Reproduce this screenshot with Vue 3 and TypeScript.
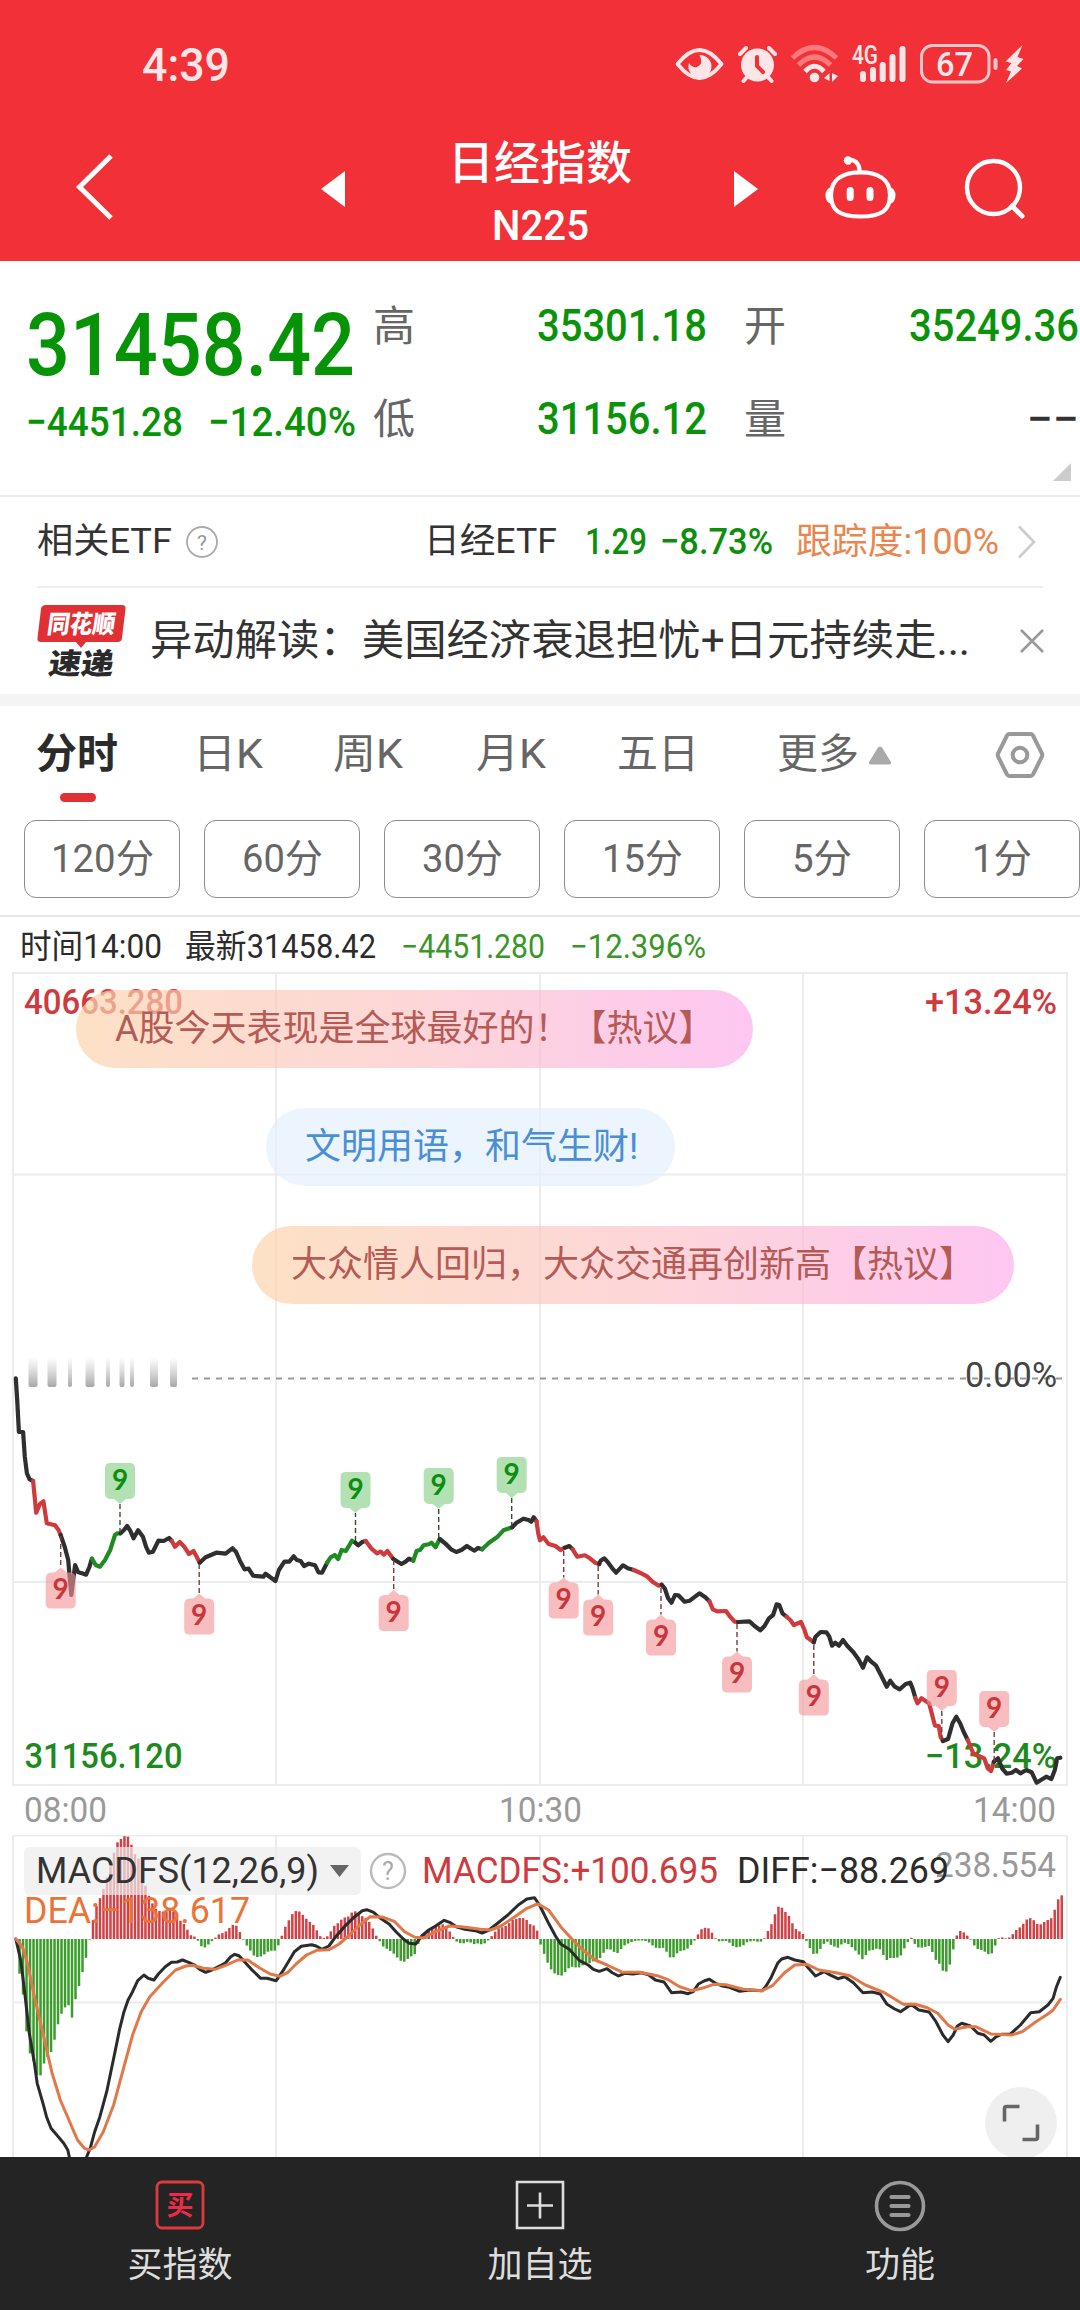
<script setup lang="ts">
import type { Directive } from 'vue'

type Pt = [number, number]

/* Condenses a run of text horizontally so that it takes exactly the given width. */
const vFit: Directive<HTMLElement, number> = {
  mounted(el, { value }) {
    el.style.display = 'inline-block'
    el.style.whiteSpace = 'nowrap'
    el.style.flexShrink = '0'
    el.style.transformOrigin = '0 50%'
    el.style.width = 'max-content'
    const natural = el.getBoundingClientRect().width
    el.style.transform = `scaleX(${value / natural})`
    el.style.marginRight = `${value - natural}px`
  },
}

const tabs = [
  { label: '分时', w: 82, gap: 36, active: true },
  { label: '日K', w: 70, gap: 75, active: false },
  { label: '周K', w: 70, gap: 70, active: false },
  { label: '月K', w: 70, gap: 73, active: false },
  { label: '五日', w: 82, gap: 71, active: false },
  { label: '更多', w: 82, gap: 78, active: false },
]
const periods = [
  { t: '120分', w: 103 },
  { t: '60分', w: 81 },
  { t: '30分', w: 81 },
  { t: '15分', w: 81 },
  { t: '5分', w: 60 },
  { t: '1分', w: 60 },
]

const KX = 2.904
const KY = 3
function parse(raw: string, ox: number, oy: number): Pt[] {
  return raw
    .trim()
    .split(/\s+/)
    .map((p) => {
      const [x, y] = p.split(',').map(Number)
      return [ox + x / KX, oy + y / KY] as Pt
    })
}
const toPoints = (pts: Pt[]) => pts.map(([x, y]) => `${x.toFixed(1)},${y.toFixed(1)}`).join(' ')

/* Price line, split in runs by colour: k = plain, r = falling nine, g = rising nine. */
const morning: [string, string][] = [
  ['k', '46,55 50,120 55,216 67,216 72,290 78,340 86,358 96,363'],
  ['r', '96,363 105,458 116,432 126,424 136,490 160,496 170,510 176,525'],
  ['k', '176,525 188,560 198,600 207,705 218,615 227,637 238,640 250,644 260,620 267,596'],
  ['g', '267,596 278,615 290,620 305,600 320,570 334,525 341,520 350,520'],
  ['k', '350,520 360,510 369,498 378,512 388,535 401,511 415,530 424,560 432,578 444,575 460,542 475,543 491,534 499,543'],
  ['r', '499,543 508,560 522,546 535,560 549,582 562,573 570,588 580,608'],
  ['k', '580,608 597,592 628,578 655,581 675,565 685,575 697,603 710,628 722,626 735,647 765,650 771,641 785,652 800,663 810,630 826,605 840,605 853,589 862,600 873,603 883,618 897,611 915,616 925,637 935,638 950,608'],
  ['g', '950,608 960,592 972,585 982,597 992,570 1004,573 1012,560 1022,542 1032,548'],
  ['k', '1032,548 1040,556 1052,546 1062,543'],
  ['r', '1062,543 1078,565 1095,580 1105,575 1115,584 1125,573 1142,597'],
  ['k', '1142,597 1155,605 1166,612 1178,605 1188,596 1200,602'],
  ['g', '1200,602 1210,572 1220,570 1230,556 1245,553 1253,548 1265,562 1277,537'],
  ['k', '1277,537 1295,552 1310,568 1325,576 1340,570 1356,558 1368,566 1378,572 1388,564 1400,568'],
  ['g', '1400,568 1420,548 1445,530 1462,511 1487,502'],
  ['k', '1487,502 1500,488 1520,476 1535,480 1543,485 1550,472 1558,484'],
  ['r', '1558,484 1563,520 1568,540'],
]
const afternoon: [string, string][] = [
  ['r', '0,300 10,292 25,312 45,318 60,330 72,323'],
  ['k', '72,323 85,318 95,328'],
  ['r', '95,328 108,350 130,346 145,355 160,368 172,372'],
  ['k', '172,372 176,362 187,355 198,368 210,385 221,398 230,388 241,376 255,385 272,390'],
  ['r', '272,390 290,398 312,410 328,426 345,437 353,434'],
  ['k', '353,434 362,445 372,475 382,488 392,465 402,466 420,485 435,482 463,460 480,472 492,484'],
  ['r', '492,484 502,508 515,514 540,513 552,530 565,545 575,546'],
  ['k', '575,546 608,544 622,557 640,571 652,558 665,535 677,525 687,493 695,495 704,520 716,530'],
  ['r', '716,530 727,540 737,555 758,546 768,570 775,592 795,607'],
  ['k', '795,607 800,590 815,576 832,577 840,590 848,617 857,608 868,617 880,600 892,617 910,637 925,658 938,683 950,652 962,665 976,677 990,705 1007,740 1017,722 1030,740 1045,748 1062,732 1075,728 1082,745 1090,773'],
  ['r', '1090,773 1096,790 1108,775 1130,790 1140,830 1147,857 1158,858 1163,890 1170,903'],
  ['k', '1170,903 1185,897 1198,850 1209,830 1220,850 1230,875 1242,900'],
  ['r', '1242,900 1258,940 1290,955 1300,985 1310,993 1318,965'],
  ['k', '1318,965 1330,955 1342,985 1355,1001 1370,998 1382,990 1395,1000 1412,990 1428,997 1442,1028 1470,1010 1485,1017 1495,990 1502,955 1511,953'],
]
const priceRuns = [
  ...morning.map(([c, raw]) => ({ c, points: toPoints(parse(raw, 0, 1360)) })),
  ...afternoon.map(([c, raw]) => ({ c, points: toPoints(parse(raw, 540, 1440)) })),
]

interface Nine { x: number; tip: number; end: number; up: boolean; c: 'r' | 'g' }
/* up: the flag stands above its point and the tip looks down */
const nines: Nine[] = [
  { x: 120, tip: 1504, end: 1533, up: true, c: 'g' },
  { x: 355.5, tip: 1513, end: 1541, up: true, c: 'g' },
  { x: 438.7, tip: 1509, end: 1538, up: true, c: 'g' },
  { x: 511.7, tip: 1498, end: 1527, up: true, c: 'g' },
  { x: 60.7, tip: 1567.5, end: 1536, up: false, c: 'r' },
  { x: 199.2, tip: 1593.5, end: 1564, up: false, c: 'r' },
  { x: 393.7, tip: 1590, end: 1560, up: false, c: 'r' },
  { x: 563.7, tip: 1577.5, end: 1551, up: false, c: 'r' },
  { x: 598.2, tip: 1594.5, end: 1566, up: false, c: 'r' },
  { x: 661, tip: 1614.5, end: 1588, up: false, c: 'r' },
  { x: 737, tip: 1651.5, end: 1624, up: false, c: 'r' },
  { x: 813.8, tip: 1674.5, end: 1645, up: false, c: 'r' },
  { x: 941.8, tip: 1711, end: 1740, up: true, c: 'r' },
  { x: 994.2, tip: 1732, end: 1761, up: true, c: 'r' },
]
const flagPath = (n: Nine) => {
  const s = n.up ? -1 : 1
  const a = n.tip + s * 5
  const b = n.tip + s * 41
  const { x } = n
  return `M${x} ${n.tip}L${x + 6} ${a}H${x + 9}Q${x + 15} ${a} ${x + 15} ${a + s * 6}V${b - s * 5}Q${x + 15} ${b} ${x + 10} ${b}H${x - 10}Q${x - 15} ${b} ${x - 15} ${b - s * 5}V${a + s * 6}Q${x - 15} ${a} ${x - 9} ${a}H${x - 6}Z`
}

const ghosts = [
  [33, 9], [52, 9], [70, 4], [90, 9], [108, 4], [122, 5], [132, 4], [154, 8], [173.5, 7],
].map(([x, w]) => ({ x: x - w / 2, w }))

/* MACD histogram */
const barKeys: Pt[] = [
  ...parse(
    '47,357 57,465 67,525 77,635 87,700 97,722 107,765 117,768 127,732 137,712 147,700 158,660 168,614 178,582 188,563 198,552 208,598 218,542 228,503 238,462 248,422 258,368 267,315 277,265 288,240 298,215 308,180 318,150 328,110 338,70 348,60 358,50 369,45 379,65 389,100 400,110 410,140 420,190 430,222 440,245 450,265 460,272 470,275 481,275 491,270 501,272 511,285 521,300 531,308 541,322 551,345 561,347 571,355 581,375 591,385 601,378 611,367 621,358 632,345 642,340 652,338 662,328 672,318 682,310 692,327 702,348 712,372 722,382 732,402 742,411 752,411 762,408 773,398 783,392 803,392 813,361 823,335 833,308 843,295 853,273 864,273 874,276 884,292 894,300 904,310 914,318 924,340 934,354 945,353 955,345 965,325 975,312 985,308 995,293 1005,292 1015,288 1025,272 1035,275 1045,285 1055,290 1066,295 1076,312 1086,333 1096,355 1106,368 1116,385 1126,387 1137,396 1147,404 1157,417 1167,425 1177,425 1187,413 1198,407 1208,400 1218,356 1228,349 1238,338 1248,330 1258,322 1268,318 1278,316 1288,312 1298,325 1308,337 1318,355 1328,367 1338,370 1348,370 1358,365 1368,368 1378,373 1388,370 1398,373 1408,370 1418,361 1428,348 1438,335 1448,325 1458,322 1468,318 1478,310 1488,300 1498,297 1508,294 1518,294 1528,298 1538,312 1548,315 1558,325',
    0, 1820,
  ),
  ...parse(
    '2,375 12,402 22,428 32,448 42,460 52,465 60,469 70,460 80,447 90,440 100,442 112,443 122,437 132,430 142,430 152,425 162,420 172,418 182,402 192,388 202,387 212,393 222,402 232,392 242,378 252,372 262,368 272,363 292,361 312,364 322,372 332,381 342,386 352,383 362,384 372,405 382,418 392,407 402,395 412,392 422,390 432,383 442,370 450,360 455,352 463,333 473,324 483,323 493,326 503,345 511,357 520,364 540,363 550,368 562,380 572,382 582,380 592,375 602,366 620,362 635,366 645,364 655,350 665,325 675,307 685,273 695,255 705,266 715,279 725,290 735,315 745,330 755,335 767,345 777,372 787,390 797,407 807,398 817,382 827,368 837,364 847,378 857,380 867,384 877,371 887,368 897,373 907,383 917,393 927,405 937,419 947,404 957,391 967,390 977,386 987,388 997,405 1007,420 1017,414 1027,414 1037,413 1047,408 1057,387 1067,368 1077,351 1087,370 1097,382 1107,383 1117,382 1127,375 1137,390 1147,418 1157,425 1167,450 1177,458 1187,446 1197,404 1207,353 1217,333 1227,333 1237,345 1247,350 1257,370 1267,386 1277,389 1287,391 1297,400 1309,406 1319,385 1329,356 1339,351 1349,355 1359,355 1369,348 1379,333 1389,325 1399,318 1409,302 1419,294 1430,295 1440,310 1450,315 1460,310 1470,300 1480,300 1490,288 1500,247 1511,226',
    540, 1820,
  ),
]
const BASE = 1939
const bars = Array.from({ length: 300 }, (_, i) => {
  const x = 16 + i * 3.4972
  let k = 1
  while (k < barKeys.length - 1 && barKeys[k][0] < x) k++
  const [x0, y0] = barKeys[k - 1]
  const [x1, y1] = barKeys[k]
  const t = Math.min(1, Math.max(0, (x - x0) / (x1 - x0)))
  const y = y0 + (y1 - y0) * t
  return { x: x - 1.2, y: Math.min(y, BASE), h: Math.max(0.6, Math.abs(y - BASE)), red: y < BASE }
})

const diffLine = toPoints([
  ...parse(
    '46,357 60,420 72,520 85,640 100,730 108,790 125,850 135,890 148,925 165,945 185,970 197,990 202,1015 225,1070 250,1015 262,985 275,935 290,890 310,815 325,740 335,690 348,625 360,575 372,540 385,515 400,482 418,465 430,475 447,480 460,462 480,440 498,427 515,426 530,420 548,427 565,435 580,448 597,457 615,450 640,437 655,428 670,410 682,403 695,408 710,425 730,448 757,475 775,475 802,482 820,455 835,430 855,395 875,379 905,374 918,378 935,388 955,378 975,350 1000,320 1030,290 1052,272 1065,269 1085,277 1105,295 1130,312 1150,335 1172,358 1188,370 1207,372 1225,348 1245,330 1265,318 1290,301 1308,308 1325,320 1350,328 1380,332 1400,339 1420,330 1445,310 1475,285 1505,255 1530,237 1552,233 1560,245',
    0, 1820,
  ),
  ...parse(
    '0,258 25,310 45,348 60,372 85,388 115,422 140,435 155,448 172,454 195,446 210,458 228,468 245,460 270,462 295,458 315,464 335,480 360,486 382,518 410,516 430,521 445,515 460,492 478,482 492,478 510,490 530,498 550,502 580,514 610,510 645,512 655,500 670,475 690,430 702,417 720,412 740,420 765,425 780,445 800,468 825,455 845,466 865,476 885,470 910,488 938,518 965,516 988,522 1008,553 1030,567 1047,575 1062,565 1077,553 1100,570 1130,576 1150,605 1170,645 1185,665 1200,645 1212,618 1225,610 1250,618 1272,640 1290,645 1309,664 1325,650 1340,643 1365,643 1395,615 1425,578 1450,575 1475,555 1490,535 1500,500 1511,472',
    540, 1820,
  ),
])
const deaLine = toPoints([
  ...parse(
    '46,357 65,380 80,430 100,530 125,640 150,755 175,840 200,900 225,960 245,985 260,990 275,980 300,935 330,855 360,740 385,645 410,575 435,530 475,485 510,450 540,438 560,436 590,445 625,448 660,434 690,420 720,420 755,445 785,462 812,469 835,458 860,432 890,405 920,391 955,389 985,372 1015,345 1045,315 1075,290 1110,291 1145,304 1175,335 1205,352 1230,354 1265,335 1305,318 1340,320 1395,328 1425,330 1455,318 1495,290 1530,265 1560,252',
    0, 1820,
  ),
  ...parse(
    '0,255 25,270 60,320 95,360 125,390 160,420 195,435 240,457 290,457 340,467 370,478 405,500 440,512 470,505 505,493 540,494 590,508 645,512 675,497 710,458 740,435 775,433 810,450 860,458 900,467 945,495 1000,518 1055,553 1090,553 1125,563 1155,580 1185,615 1205,628 1240,620 1265,620 1310,642 1370,645 1400,635 1440,605 1475,582 1490,570 1511,538',
    540, 1820,
  ),
])
</script>

<template>
  <div class="page" lang="zh-CN">
    <header class="header">
      <div class="status">
        <span v-fit="88" class="clock">4:39</span>
        <svg class="status-icons" width="360" height="44" viewBox="670 42 360 44">
          <g fill="none" stroke="#ffe6e6" stroke-linecap="round" stroke-linejoin="round">
            <path d="M677.500 64Q699.500 36 721.500 64Q699.500 92 677.500 64Z" stroke-width="3.800" />
          </g>
          <path d="M699.500 55A11.500 11.500 0 1 1 689 63Q692 68 697 67Q704 64 699.500 55Z" fill="#ffe6e6" />
          <circle cx="757.500" cy="65" r="16.500" fill="#ffe6e6" />
          <path d="M740 54L746 48M775 54L769 48M747 77L743.500 81M768 77L771.500 81" stroke="#ffe6e6" stroke-width="4" stroke-linecap="round" />
          <path d="M757 57V66L763 72" fill="none" stroke="#f23038" stroke-width="4" stroke-linecap="round" />
          <g fill="none" stroke-width="5" stroke-linecap="butt">
            <path d="M792.500 58Q814.500 37 836.500 58" stroke="#fa7a7e" />
            <path d="M798.500 65Q814.500 49 830.500 65" stroke="#fa7a7e" />
            <path d="M805 71.500Q814.500 61 824 71.500" stroke="#ffe6e6" />
          </g>
          <circle cx="814.500" cy="77.500" r="4.800" fill="#ffe6e6" />
          <path d="M824 78L829.500 73V81ZM838 76L832 73V82Z" fill="#ffe6e6" />
          <text x="852" y="64" font-size="25" font-weight="500" textLength="26" lengthAdjust="spacingAndGlyphs" fill="#ffe6e6">4G</text>
          <path d="M863 74V79M873 70V79M882.700 65V79M892.500 57V79M902.500 49V79" stroke="#ffe6e6" stroke-width="6" stroke-linecap="round" />
          <rect x="921.500" y="45.500" width="67.500" height="36.500" rx="11" fill="none" stroke="#ffc4c6" stroke-width="3" />
          <text x="936" y="76" font-size="34" font-weight="500" textLength="37" lengthAdjust="spacingAndGlyphs" fill="#ffe6e6">67</text>
          <rect x="993.500" y="58" width="4" height="12" rx="2" fill="#ffc4c6" />
          <path d="M1022.500 45L1005.500 61.500L1011.500 63L1006 70L1011 71.500L1006 83L1022 68.500L1017 66L1023.500 59L1017.500 57Z" fill="#ffe6e6" />
        </svg>
      </div>
      <div class="titlebar">
        <svg class="nav-back" width="40" height="68" viewBox="75 153 40 68">
          <path d="M111 156L79.500 187L111 218" fill="none" stroke="#fff" stroke-width="5" />
        </svg>
        <svg class="nav-prev" width="25" height="38" viewBox="0 0 25 38"><path d="M0 19L24 1V37Z" fill="#fff" /></svg>
        <div class="title">
          <div class="name">日经指数</div>
          <span v-fit="97" class="code">N225</span>
        </div>
        <svg class="nav-next" width="25" height="38" viewBox="0 0 25 38"><path d="M24 19L0 1V37Z" fill="#fff" /></svg>
        <svg class="nav-robot" width="76" height="66" viewBox="824 154 76 66">
          <g fill="none" stroke="#fff" stroke-width="4.200">
            <path d="M861.500 172.300C877 172.300 891 178 891 195C891 210 883 216.500 861.500 216.500C840 216.500 832 210 832 195C832 178 846 172.300 861.500 172.300Z" />
            <path d="M848 160C855 158.500 860.500 163 860.500 171" />
          </g>
          <circle cx="849" cy="160.500" r="4.200" fill="#fff" />
          <path d="M832 187Q826.500 189 826.500 195.500Q826.500 202 832 204ZM891 187Q896.500 189 896.500 195.500Q896.500 202 891 204Z" fill="#fff" />
          <path d="M851.200 190.500V197.500M871 190.500V197.500" stroke="#fff" stroke-width="7" stroke-linecap="round" />
        </svg>
        <svg class="nav-search" width="64" height="64" viewBox="963 157 64 64">
          <circle cx="994.500" cy="187.500" r="26.500" fill="none" stroke="#fff" stroke-width="4.400" />
          <path d="M1013 206L1023 216" stroke="#fff" stroke-width="5" stroke-linecap="round" />
        </svg>
      </div>
    </header>

    <section class="quote">
      <div class="last">
        <div class="price"><span v-fit="329">31458.42</span></div>
        <div class="change">
          <span v-fit="157">−4451.28</span>
          <span v-fit="148">−12.40%</span>
        </div>
      </div>
      <div class="stats">
        <span class="lab">高</span><span class="val"><span v-fit="170">35301.18</span></span>
        <span class="lab">开</span><span class="val"><span v-fit="170">35249.36</span></span>
        <span class="lab">低</span><span class="val"><span v-fit="170">31156.12</span></span>
        <span class="lab">量</span><span class="val none"><span v-fit="52">−−</span></span>
      </div>
      <i class="corner"></i>
    </section>

    <section class="etf">
      <span v-fit="135">相关ETF</span>
      <svg class="help" width="34" height="34" viewBox="0 0 34 34">
        <circle cx="17" cy="17" r="15" fill="none" stroke="#aaa" stroke-width="1.800" />
        <text x="17" y="24.500" text-anchor="middle" font-size="21" fill="#999">?</text>
      </svg>
      <span v-fit="133" class="etf-name">日经ETF</span>
      <span v-fit="62" class="green etf-price">1.29</span>
      <span v-fit="113" class="green etf-pct">−8.73%</span>
      <span v-fit="203" class="track">跟踪度:100%</span>
      <svg class="chev" width="20" height="34" viewBox="0 0 20 34"><path d="M2 1.500L17 17L2 32.500" fill="none" stroke="#ccc" stroke-width="2.600" /></svg>
    </section>

    <section class="news">
      <svg class="logo" width="92" height="76" viewBox="36 602 92 76">
        <path d="M46 604H122Q126 604 125.500 608L122 637Q121.500 641 117.500 641H86L81 647L76 641H41Q37 641 37.500 637L41 608Q41.500 604 46 604Z" fill="#e03033" />
        <g class="brand" transform="skewX(-8)">
          <text x="135" y="632" font-size="25" textLength="68" lengthAdjust="spacingAndGlyphs" fill="#fff">同花顺</text>
          <text x="142" y="673" font-size="29" textLength="65" lengthAdjust="spacingAndGlyphs" fill="#2a2a2a">速递</text>
        </g>
      </svg>
      <span v-fit="820" class="headline">异动解读：美国经济衰退担忧+日元持续走...</span>
      <svg class="close" width="28" height="28" viewBox="0 0 28 28"><path d="M3 3L25 25M25 3L3 25" stroke="#999" stroke-width="2.600" /></svg>
    </section>

    <nav class="tabs">
      <div v-for="t in tabs" :key="t.label" class="tab" :class="{ active: t.active }" :style="{ marginLeft: t.gap + 'px' }">
        <span v-fit="t.w">{{ t.label }}</span>
      </div>
      <svg class="more" width="24" height="19" viewBox="0 0 24 19"><path d="M10 1.500Q12 -0.500 14 1.500L23 16Q23.500 18.500 21 18.500H3Q0.500 18.500 1 16Z" fill="#aaa" /></svg>
      <svg class="gear" width="50" height="48" viewBox="0 0 50 48">
        <path d="M14.500 3H35.500Q37 3 38 4.500L47 22.500Q47.500 24 47 25.500L38 43.500Q37 45 35.500 45H14.500Q13 45 12 43.500L3 25.500Q2.500 24 3 22.500L12 4.500Q13 3 14.500 3Z" fill="none" stroke="#999" stroke-width="4" />
        <circle cx="25" cy="24" r="7.300" fill="none" stroke="#999" stroke-width="4" />
      </svg>
    </nav>

    <div class="periods">
      <div v-for="p in periods" :key="p.t" class="period"><span v-fit="p.w">{{ p.t }}</span></div>
    </div>

    <div class="info">
      <span v-fit="142">时间14:00</span>
      <span v-fit="191" class="i2">最新31458.42</span>
      <span v-fit="144" class="down i3">−4451.280</span>
      <span v-fit="136" class="down i4">−12.396%</span>
    </div>

    <section class="chart">
      <svg width="1080" height="814" viewBox="0 972 1080 814">
        <defs>
          <linearGradient id="ghost" x1="0" y1="0" x2="0" y2="1">
            <stop offset="0" stop-color="#bbb" stop-opacity="0" />
            <stop offset="1" stop-color="#a8a8a8" />
          </linearGradient>
        </defs>
        <g stroke="#ececec" stroke-width="2" fill="none">
          <path d="M13 973H1067V1785H13ZM276 973V1785M540 973V1785M803 973V1785M13 1174.500H1067M13 1582H1067" />
        </g>
        <path d="M192 1378.500H1062" stroke="#999" stroke-width="2.200" stroke-dasharray="6 6" />
        <rect v-for="g in ghosts" :key="g.x" :x="g.x" y="1357" :width="g.w" height="30" rx="2" fill="url(#ghost)" />
        <text class="lbl" x="24.500" y="1768" fill="#1c8a1c" textLength="158" lengthAdjust="spacingAndGlyphs">31156.120</text>
        <text class="lbl" x="925" y="1768" fill="#1c8a1c" textLength="132" lengthAdjust="spacingAndGlyphs">−13.24%</text>
        <text class="lbl" x="24" y="1014" fill="#cf3a3e" textLength="159" lengthAdjust="spacingAndGlyphs">40663.280</text>
        <text class="lbl" x="925" y="1014" fill="#cf3a3e" textLength="132" lengthAdjust="spacingAndGlyphs">+13.24%</text>
        <text class="lbl zero" x="965" y="1387" fill="#444" textLength="92" lengthAdjust="spacingAndGlyphs">0.00%</text>
        <polyline v-for="(r, i) in priceRuns" :key="i" class="run" :class="r.c" :points="r.points" />
        <g v-for="n in nines" :key="n.x" :class="['nine', n.c]">
          <path class="stem" :d="`M${n.x} ${n.end}V${n.tip}`" />
          <path class="flag" :d="flagPath(n)" />
          <text :x="n.x" :y="n.up ? n.tip - 14 : n.tip + 31.500" text-anchor="middle">9</text>
        </g>
      </svg>
      <div class="pill hot p1">A股今天表现是全球最好的！【热议】</div>
      <div class="pill calm p2">文明用语，和气生财!</div>
      <div class="pill hot p3">大众情人回归，大众交通再创新高【热议】</div>
    </section>

    <div class="axis">
      <span v-fit="83">08:00</span>
      <span v-fit="83">10:30</span>
      <span v-fit="83">14:00</span>
    </div>

    <section class="macd">
      <svg width="1080" height="322" viewBox="0 1835 1080 322">
        <path d="M13 2170V1835.500H1067V2170M276 1835V2160M540 1835V2160M803 1835V2160M13 2002.500H1067" stroke="#ececec" stroke-width="2" fill="none" />
        <rect v-for="b in bars" :key="b.x" :x="b.x" :y="b.y" width="2.500" :height="b.h" :fill="b.red ? '#d04246' : '#3c9c2c'" />
        <text class="sub" x="935" y="1877" font-size="35" fill="#999" textLength="121" lengthAdjust="spacingAndGlyphs">238.554</text>
        <text class="sub" x="24" y="1923" font-size="37" fill="#ea7438" textLength="226" lengthAdjust="spacingAndGlyphs">DEA:−138.617</text>
        <polyline :points="diffLine" fill="none" stroke="#2b2b2b" stroke-width="3" stroke-linejoin="round" stroke-linecap="round" />
        <polyline :points="deaLine" fill="none" stroke="#e0784a" stroke-width="3" stroke-linejoin="round" stroke-linecap="round" />
      </svg>
      <div class="legend">
        <div class="picker">
          <span v-fit="283">MACDFS(12,26,9)</span>
          <svg width="19" height="12" viewBox="0 0 19 12"><path d="M0 0H19L9.500 12Z" fill="#666" /></svg>
        </div>
        <svg class="help2" width="38" height="38" viewBox="0 0 38 38">
          <circle cx="19" cy="19" r="17" fill="none" stroke="#bbb" stroke-width="2.400" />
          <text x="19" y="28" text-anchor="middle" font-size="25" fill="#aaa">?</text>
        </svg>
        <span v-fit="296" class="m1">MACDFS:+100.695</span>
        <span v-fit="212" class="m2">DIFF:−88.269</span>
      </div>
      <div class="expand">
        <svg width="40" height="40" viewBox="0 0 40 40"><path d="M3.500 18.500V5.500Q3.500 3.500 5.500 3.500H18.500M36.500 21.500V34.500Q36.500 36.500 34.500 36.500H21.500" fill="none" stroke="#666" stroke-width="3.600" /></svg>
      </div>
    </section>

    <footer class="bottom">
      <div class="item">
        <svg width="54" height="54" viewBox="0 0 54 54">
          <rect x="4" y="4" width="46" height="46" rx="5" fill="none" stroke="#dd3a3c" stroke-width="2.800" />
          <text x="27" y="37" text-anchor="middle" font-size="27" font-weight="700" fill="#ee2b45">买</text>
        </svg>
        <span>买指数</span>
      </div>
      <div class="item">
        <svg width="54" height="54" viewBox="0 0 54 54">
          <path d="M4 4H50V50H4ZM27 14.500V40.500M14 27.500H40" fill="none" stroke="#ddd" stroke-width="2.600" />
        </svg>
        <span>加自选</span>
      </div>
      <div class="item">
        <svg width="54" height="54" viewBox="0 0 54 54">
          <circle cx="27" cy="28" r="23.500" fill="none" stroke="#999" stroke-width="3.600" />
          <path d="M18.500 19H35.500M18.500 28H35.500M18.500 37H35.500" stroke="#999" stroke-width="4.200" stroke-linecap="round" />
        </svg>
        <span>功能</span>
      </div>
    </footer>
  </div>
</template>

<style>
body {
  margin: 0;
  background: #fff;
}
</style>

<style scoped>
.page {
  width: 1080px;
  height: 2310px;
  overflow: hidden;
  background: #fff;
  color: #333;
  font-family: Roboto, 'Noto Sans CJK SC', sans-serif;
  text-spacing-trim: space-all;
}
svg {
  display: block;
  flex-shrink: 0;
}
.header {
  height: 261px;
  background: #f23038;
  color: #fff;
}
.status {
  height: 130px;
  display: flex;
  align-items: center;
  padding-left: 142px;
  box-sizing: border-box;
}
.clock {
  font-size: 47px;
  line-height: 60px;
  font-weight: 500;
  color: #ffe6e6;
}
.status-icons {
  margin-left: 440px;
  margin-top: -2px;
}
.titlebar {
  height: 131px;
  display: flex;
  align-items: flex-start;
}
.nav-back { margin: 23px 0 0 75px; }
.nav-prev { margin: 40px 0 0 206px; }
.title {
  width: 186px;
  margin-left: 101px;
  text-align: center;
}
.name {
  font-size: 46px;
  font-weight: 500;
  line-height: 60px;
  margin-top: 3px;
  white-space: nowrap;
}
.code {
  font-size: 42px;
  font-weight: 500;
  line-height: 50px;
  margin-top: 8px;
}
.nav-next { margin: 40px 0 0 101px; }
.nav-robot { margin: 24px 0 0 64px; }
.nav-search { margin: 27px 0 0 63px; }

.quote {
  position: relative;
  height: 234px;
  display: flex;
  border-bottom: 2px solid #ececec;
}
.last {
  width: 347px;
  padding-left: 26px;
  color: #069406;
}
.price {
  margin-top: 39px;
  height: 90px;
  line-height: 90px;
  font-size: 88px;
  font-weight: 500;
}
.change {
  display: flex;
  gap: 25px;
  margin-top: 7px;
  font-size: 41px;
  line-height: 50px;
  font-weight: 500;
}
.stats {
  display: grid;
  grid-template-columns: 42px 292px 37px 42px 293px;
  grid-template-rows: 93px 93px;
  margin-top: 19px;
  line-height: 93px;
}
.lab {
  font-size: 42px;
  color: #666;
}
.lab:nth-of-type(4n + 3) { grid-column: 4; }
.val {
  text-align: right;
  font-size: 44px;
  font-weight: 500;
  color: #0a930a;
}
.val.none { color: #333; }
.corner {
  position: absolute;
  right: 9px;
  bottom: 14px;
  border-left: 18px solid transparent;
  border-bottom: 18px solid #ccc;
}

.etf {
  height: 91px;
  margin: 0 37px;
  padding-left: 0;
  display: flex;
  align-items: center;
  border-bottom: 2px solid #f0f0f0;
  font-size: 35px;
  line-height: 50px;
  box-sizing: border-box;
  white-space: nowrap;
}
.help { margin-left: 13px; }
.etf-name { margin-left: 205px; }
.etf-price { margin-left: 28px; font-size: 37px; font-weight: 500; }
.etf-pct { margin-left: 13px; font-size: 37px; font-weight: 500; }
.green { color: #0e8e0e; }
.track { margin-left: 23px; color: #e8864e; font-size: 36px; }
.chev { margin-left: 18px; }

.news {
  height: 106px;
  display: flex;
  align-items: center;
  padding-left: 36px;
  box-sizing: border-box;
}
.logo { overflow: visible; }
.brand {
  font-family: 'Noto Sans CJK SC', sans-serif;
  font-weight: 900;
}
.headline {
  margin-left: 22px;
  font-size: 42px;
  line-height: 60px;
}
.close { margin-left: 48px; }

.tabs {
  height: 110px;
  border-top: 12px solid #f4f4f4;
  box-sizing: border-box;
  display: flex;
  align-items: center;
  font-size: 41px;
  line-height: 60px;
  color: #666;
}
.tab {
  position: relative;
  height: 98px;
  line-height: 97px;
}
.tab.active {
  font-weight: 700;
  color: #2b2b2b;
}
.tab.active::after {
  content: '';
  position: absolute;
  left: 24px;
  bottom: 2px;
  width: 36px;
  height: 9px;
  border-radius: 5px;
  background: #e03033;
}
.more { margin-left: 9px; }
.gear { margin-left: 103px; }

.periods {
  margin-top: 16px;
  padding: 0 0 17px 24px;
  display: flex;
  gap: 24px;
  border-bottom: 2px solid #e8e8e8;
}
.period {
  width: 156px;
  height: 78px;
  flex-shrink: 0;
  box-sizing: border-box;
  border: 1.500px solid #8c8c8c;
  border-radius: 12px;
  text-align: center;
  font-size: 39px;
  line-height: 77px;
  color: #666;
}

.info {
  height: 55px;
  display: flex;
  padding-left: 20px;
  font-size: 33px;
  line-height: 59px;
  color: #2b2b2b;
}
.i2 { margin-left: 23px; }
.i3 { margin-left: 25px; }
.i4 { margin-left: 25px; }
.down { color: #3a9628; }

.chart { position: relative; height: 814px; }
.lbl {
  font-size: 35px;
  font-weight: 500;
}
.lbl.zero { font-weight: 400; }
.sub { font-weight: 400; }
.run {
  fill: none;
  stroke-width: 4.200;
  stroke-linejoin: round;
  stroke-linecap: round;
}
.run.k { stroke: #2f2f2f; }
.run.r { stroke: #cf3a3c; }
.run.g { stroke: #1e8c22; }
.stem {
  stroke-width: 1.400;
  stroke-dasharray: 5 3;
}
.nine.g .stem { stroke: #33502f; }
.nine.r .stem { stroke: #7c3a3a; }
.nine.g .flag { fill: rgba(150, 213, 150, 0.72); }
.nine.r .flag { fill: rgba(243, 150, 152, 0.62); }
.nine text {
  font-size: 28px;
  font-weight: 700;
  font-family: Lato, sans-serif;
}
.nine.g text { fill: #0c8e10; }
.nine.r text { fill: #c8363c; }

.pill {
  position: absolute;
  height: 78px;
  line-height: 78px;
  border-radius: 39px;
  padding-left: 39px;
  box-sizing: border-box;
  font-size: 36px;
  white-space: nowrap;
}
.hot {
  background: linear-gradient(90deg, rgba(252, 212, 172, 0.7), rgba(252, 190, 192, 0.62) 50%, rgba(252, 175, 236, 0.7));
  color: #b65a55;
}
.calm {
  background: rgba(226, 238, 254, 0.66);
  color: #4a8fd6;
}
.p1 { left: 76px; top: 18px; width: 677px; }
.p2 { left: 266px; top: 136px; width: 409px; }
.p3 { left: 252px; top: 254px; width: 762px; }

.axis {
  height: 49px;
  display: flex;
  justify-content: space-between;
  padding: 0 24px;
  font-size: 35px;
  line-height: 49px;
  color: #999;
}

.macd { position: relative; height: 322px; overflow: hidden; }
.legend {
  position: absolute;
  left: 24px;
  top: 11px;
  display: flex;
  align-items: center;
  font-size: 37px;
  line-height: 49px;
}
.picker {
  width: 337px;
  height: 48px;
  padding-left: 12px;
  box-sizing: border-box;
  display: flex;
  align-items: center;
  gap: 11px;
  border-radius: 6px;
  background: rgba(236, 236, 236, 0.7);
}
.help2 { margin-left: 8px; }
.m1 { margin-left: 15px; color: #cf3a3e; }
.m2 { margin-left: 19px; color: #2b2b2b; }
.expand {
  position: absolute;
  left: 985px;
  top: 252px;
  width: 72px;
  height: 72px;
  border-radius: 50%;
  background: #efefef;
  display: flex;
  align-items: center;
  justify-content: center;
}

.bottom {
  height: 153px;
  background: #242424;
  display: flex;
}
.item {
  flex: 1;
  display: flex;
  flex-direction: column;
  align-items: center;
  padding-top: 21px;
  font-size: 35px;
  line-height: 50px;
  color: #ddd;
}
.item span { margin-top: 9px; }
</style>
